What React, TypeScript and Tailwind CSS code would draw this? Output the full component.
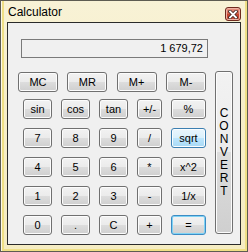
import React from "react";

const base =
  "flex items-center justify-center rounded-[3px] border text-[11px] leading-none text-black";
const normal =
  "border-[#707070] bg-[linear-gradient(to_bottom,#f2f2f2_0%,#ebebeb_50%,#dddddd_50%,#cfcfcf_100%)] shadow-[inset_0_0_0_1px_#fcfcfc]";
const hover =
  "border-[#3c7fb1] bg-[linear-gradient(to_bottom,#eaf6fd_0%,#d9f0fc_50%,#bee6fd_50%,#a7d9f5_100%)] shadow-[inset_0_0_0_1px_#fafdff]";
const deflt =
  "border-[#3c8cc4] bg-[linear-gradient(to_bottom,#f2f2f2_0%,#ebebeb_50%,#dddddd_50%,#cfcfcf_100%)] shadow-[inset_0_0_0_1px_#7fd3f5]";

function Btn({ label, kind = "n", w }: { label: string; kind?: "n" | "h" | "d"; w?: string }) {
  const k = kind === "h" ? hover : kind === "d" ? deflt : normal;
  return <div className={`${base} ${k} h-[20px] ${w ?? ""}`}>{label}</div>;
}

export default function App() {
  const grid: { l: string; k?: "n" | "h" | "d" }[] = [
    { l: "sin" }, { l: "cos" }, { l: "tan" }, { l: "+/-" }, { l: "%" },
    { l: "7" }, { l: "8" }, { l: "9" }, { l: "/" }, { l: "sqrt", k: "h" },
    { l: "4" }, { l: "5" }, { l: "6" }, { l: "*" }, { l: "x^2" },
    { l: "1" }, { l: "2" }, { l: "3" }, { l: "-" }, { l: "1/x" },
    { l: "0" }, { l: "." }, { l: "C" }, { l: "+" }, { l: "=", k: "d" },
  ];
  return (
    <div
      className="w-[248px] h-[252px] bg-white"
      style={{ fontFamily: '"Liberation Sans", Arial, sans-serif' }}
    >
      <div className="w-[248px] h-[252px] border border-[#5e5c52] bg-[linear-gradient(to_bottom,#f8f2d6_0%,#f6eec8_40%,#f5ecc2_100%)] flex flex-col shadow-[inset_1px_0_0_#fbf8e8,inset_3px_0_0_#efdf86,inset_-2px_0_0_#efdf86,inset_0_-2px_0_#efdf86]">
        <div className="h-[21px] flex items-start shrink-0">
          <div className="ml-[7px] mt-[4px] text-[12px] leading-[14px] text-black">Calculator</div>
          <div className="ml-auto mr-[6px] mt-[6px] w-[16px] h-[14px] rounded-[3px] border border-[#6e2a1e] bg-[linear-gradient(to_bottom,#e8998a_0%,#d6654f_45%,#c23f2a_55%,#cc5540_100%)] shadow-[inset_0_0_0_1px_#eeb2a4] flex items-center justify-center">
            <svg width="10" height="9" viewBox="0 0 10 9">
              <path d="M2 1.5 L8 7.5 M8 1.5 L2 7.5" stroke="#3e2520" strokeWidth="3.4" strokeLinecap="square" />
              <path d="M2 1.5 L8 7.5 M8 1.5 L2 7.5" stroke="#ffffff" strokeWidth="1.8" strokeLinecap="square" />
            </svg>
          </div>
        </div>
        <div className="mx-[6px] mb-[6px] flex-1 border border-[#2a2a2a] bg-[#f0f0f0] flex flex-col">
          <div className="mt-[16px] ml-[13px] w-[187px] h-[19px] border border-[#7a7a7a] text-right pr-[4px] text-[11px] leading-[17px] text-black">
            1 679,72
          </div>
          <div className="mt-[13px] flex">
            <div className="w-[199px] flex flex-col">
              <div className="mt-[1px] ml-[10px] w-[188px] flex justify-between">
                <Btn label="MC" w="w-[40px]" />
                <Btn label="MR" w="w-[40px]" />
                <Btn label="M+" w="w-[40px]" />
                <Btn label="M-" w="w-[40px]" />
              </div>
              <div className="mt-[7px] ml-[15px] grid grid-cols-[29px_29px_29px_25px_35px] gap-x-[9px] gap-y-[9px]">
                {grid.map((b) => (
                  <Btn key={b.l} label={b.l} kind={b.k} />
                ))}
              </div>
            </div>
            <div
              className={`ml-[8px] w-[18px] h-[163px] rounded-[3px] border ${normal} flex flex-col items-center justify-center text-[12px] leading-[13px] text-black`}
            >
              {"CONVERT".split("").map((c, i) => (
                <div key={i}>{c}</div>
              ))}
            </div>
          </div>
        </div>
      </div>
    </div>
  );
}
